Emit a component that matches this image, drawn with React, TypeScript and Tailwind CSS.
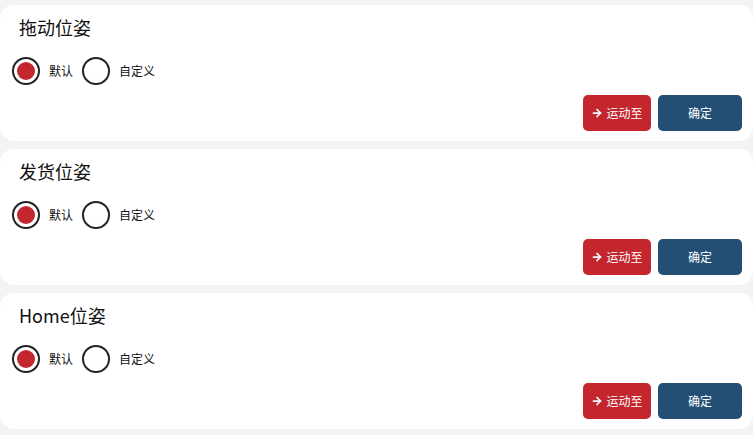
import { useState } from 'react'
import { ArrowRight } from 'lucide-react'

type PoseCardProps = {
  title: string
}

function Radio({ checked, label, onClick }: { checked: boolean; label: string; onClick: () => void }) {
  return (
    <button type="button" onClick={onClick} className="flex items-center gap-[9px]">
      <span className="flex h-[28px] w-[28px] items-center justify-center rounded-full border-2 border-[#222222] bg-white">
        {checked && <span className="h-[18px] w-[18px] rounded-full bg-[#c4262e]" />}
      </span>
      <span className="text-[12px] text-[#111111]">{label}</span>
    </button>
  )
}

function PoseCard({ title }: PoseCardProps) {
  const [mode, setMode] = useState<'default' | 'custom'>('default')

  return (
    <div className="flex h-[136px] flex-col rounded-[14px] bg-white">
      <div className="pl-[19px] pt-[10px] text-[18px] leading-[24px] text-[#111111]">{title}</div>
      <div className="mt-[18px] flex items-center gap-[9px] pl-[12px]">
        <Radio checked={mode === 'default'} label="默认" onClick={() => setMode('default')} />
        <Radio checked={mode === 'custom'} label="自定义" onClick={() => setMode('custom')} />
      </div>
      <div className="mt-auto flex justify-end gap-[7px] pb-[10px] pr-[11px]">
        <button
          type="button"
          className="flex h-[36px] w-[68px] items-center justify-center gap-[3px] rounded-[5px] bg-[#c4262e] text-[12px] text-white"
        >
          <ArrowRight size={12} strokeWidth={3.5} />
          运动至
        </button>
        <button
          type="button"
          className="flex h-[36px] w-[84px] items-center justify-center rounded-[5px] bg-[#234f75] text-[12px] text-white"
        >
          确定
        </button>
      </div>
    </div>
  )
}

export default function App() {
  const poses = ['拖动位姿', '发货位姿', 'Home位姿']

  return (
    <div
      className="flex min-h-[435px] w-[753px] flex-col gap-[8px] bg-[#f3f3f3] pt-[5px]"
      style={{ fontFamily: '"Noto Sans CJK SC", "Noto Sans", sans-serif' }}
    >
      {poses.map((p) => (
        <PoseCard key={p} title={p} />
      ))}
    </div>
  )
}
